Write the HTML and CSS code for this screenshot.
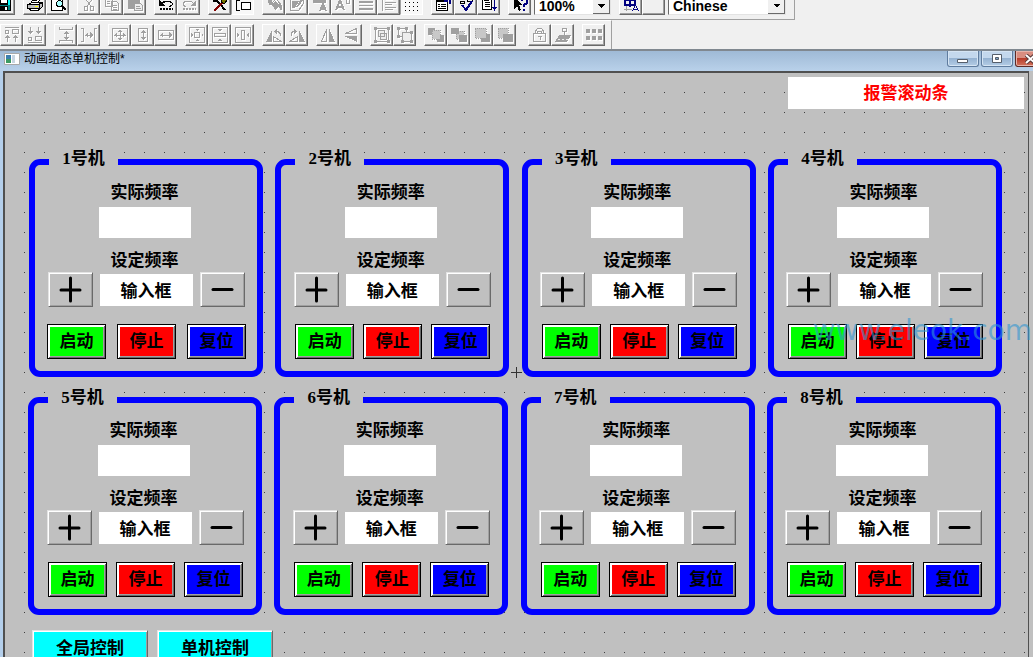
FILE: index.html
```
<!DOCTYPE html>
<html lang="zh-CN">
<head>
<meta charset="utf-8">
<title>动画组态单机控制</title>
<link rel="stylesheet" href="styles.css">
</head>
<body>
<div class="app">
  <div class="toolbar toolbar-main">
    <div class="group group-cut">
      <button class="tool" aria-label="保存"><svg viewBox="0 0 16 16"><path fill="#000" d="M1 1h14v14H1z"/><path fill="#0ff" d="M2 2h2v7H2zM12 2h2v7h-2z"/><path fill="#008080" d="M2 9h12v5H2z"/><path fill="#fff" d="M5 2h6v5H5z"/><path d="M4 10h8v5H4z"/><path fill="#fff" d="M9 11h2v3H9z"/></svg></button>
    </div>
    <div class="group">
      <button class="tool" aria-label="打印"><svg viewBox="0 0 16 16"><path fill="#fff" stroke="#000" d="M4.500 6.500l2-6h7l-2 6zM1.500 8.500l3-2h10l-3 2z"/><path fill="#c0c0c0" stroke="#000" d="M.5 8.500h12v4H.5zM12.500 8.500l3-2v4l-3 3z"/><path fill="#fff" stroke="#000" d="M2.500 12.500h10l-1 2h-8z"/><path fill="#ff0" d="M8 10h3v1H8z"/><path d="M7 2h4v1H7zM6 4h4v1H6z"/></svg></button>
      <button class="tool" aria-label="打印预览"><svg viewBox="0 0 16 16"><path fill="#fff" stroke="#000" d="M1.500.5h8l3 3v11h-11z"/><circle cx="9.500" cy="7.500" r="3" fill="#aff" stroke="#000"/><path stroke="#000" stroke-width="2" d="M12 10l3.500 4"/></svg></button>
    </div>
    <div class="group">
      <button class="tool off" aria-label="剪切"><svg viewBox="0 0 16 16"><path class="s" d="M5.500 0v4l4 6M10.500 0v4l-4 6"/><ellipse class="s" cx="5" cy="12.500" rx="1.500" ry="2.500"/><ellipse class="s" cx="11" cy="12.500" rx="1.500" ry="2.500"/></svg></button>
      <button class="tool off" aria-label="复制"><svg viewBox="0 0 16 16"><path class="s" d="M1.500 1.500h5l2 2v7h-7zM3 5h3M3 7h3M7.500 5.500h5l2 2v7h-7zM9 9h4M9 11h4M9 13h4"/></svg></button>
      <button class="tool off" aria-label="粘贴"><svg viewBox="0 0 16 16"><path d="M1 2h12v11H1z"/><path fill="#eee" stroke="#a0a0a0" d="M7.500 7.500h6l2 2v5h-8zM9 10h4M9 12h5"/></svg></button>
    </div>
    <div class="group">
      <button class="tool" aria-label="撤销"><svg viewBox="0 0 16 16"><path d="M1 4v6h6zM5 6h2v1H5z"/><path stroke="#000" stroke-width="2" stroke-dasharray="2 1" d="M2 13h13"/><path class="k" d="M4 7l2-2h5l3 2v2l-3 2"/></svg></button>
      <button class="tool off" aria-label="重做"><svg viewBox="0 0 16 16"><path d="M15 4v6H9z"/><path stroke="#a0a0a0" stroke-width="2" stroke-dasharray="2 1" d="M2 13h13"/><path class="s" d="M12 7l-2-2H5L2 7v2l3 2"/></svg></button>
    </div>
    <div class="group">
      <button class="tool" aria-label="工具"><svg viewBox="0 0 16 16"><path stroke="#000" stroke-width="2" d="M3 2l10 12"/><path d="M1 2h6v2H5v2H1z"/><path stroke="#800000" stroke-width="2" d="M10 7l-8 8"/><path fill="#770" stroke="#000" d="M9.500 3.500l3-3v3h3l-3 4-3-1z"/></svg></button>
      <button class="tool pressed" aria-label="窗口布局"><svg viewBox="0 0 16 16"><path class="k" d="M1.500 15V1.500h13M1 4.500h4M1 14.500h4M6.500 6.500h9v7h-9z"/><path fill="#fff" d="M7 7h8v6H7z"/></svg></button>
    </div>
    <div class="group">
      <button class="tool off" aria-label="填充色"><svg viewBox="0 0 16 16"><path d="M2 4h4v5H3zM5 7l5-5 5 6-6 6z"/><path stroke="#fff" d="M7 7l3-3 3 4"/><path d="M13 9h3v5h-2z"/></svg></button>
      <button class="tool off" aria-label="线色"><svg viewBox="0 0 16 16"><path class="s" d="M1.500 2.500h13v5l-5 7h-8z"/><path d="M3 5h7l-4 7H3zM12 3h3l-6 8H7z"/></svg></button>
      <button class="tool off" aria-label="字符色"><svg viewBox="0 0 16 16"><path d="M1 2h13v5H1z"/><path class="s" stroke-width="2" d="M8 15l3-7 3 7M9 13h4"/></svg></button>
      <button class="tool off" aria-label="字符字体"><svg viewBox="0 0 16 16"><path class="s" stroke-width="2" d="M1 14L5 4l4 10M3 11h5"/><path class="s" d="M11.500 3.500h3v4h-3zM14.500 1v7"/></svg></button>
      <button class="tool off" aria-label="线型"><svg viewBox="0 0 16 16"><path d="M1 2h14v1H1zM1 5h14v2H1zM1 9h14v1H1zM1 12h14v2H1z"/></svg></button>
      <button class="tool off" aria-label="对齐"><svg viewBox="0 0 16 16"><path d="M1 1h1v14H1zM4 3h7v1H4zM4 6h11v1H4zM4 8h7v1H4zM4 11h11v1H4zM4 13h8v1H4z"/></svg></button>
      <button class="tool pressed" aria-label="网格"><svg viewBox="0 0 16 16"><path stroke="#000" stroke-dasharray="1 3" d="M1 2.500h15M1 6.500h15M1 10.500h15M1 14.500h15"/></svg></button>
    </div>
    <div class="group">
      <button class="tool" aria-label="属性"><svg viewBox="0 0 16 16"><path fill="#fff" stroke="#000" d="M1.500 4.500h11v10h-11z"/><path d="M1 3h8v3H1zM3 8h2v1H3zM6 8h5v1H6zM3 10h2v1H3zM6 10h5v1H6zM3 12h8v1H3z"/><path fill="#000080" d="M9 2h4v4H9zM14 1h2v7h-2z"/></svg></button>
      <button class="tool" aria-label="检查"><svg viewBox="0 0 16 16"><path class="k" d="M2 5.500h4v2H2zM9 3.500h5v2H9z"/><path fill="none" stroke="#000080" stroke-width="2" d="M4 9l4 5 6-9"/></svg></button>
      <button class="tool" aria-label="排序"><svg viewBox="0 0 16 16"><path fill="#fff" stroke="#000" d="M1.500.5h9v13h-9z"/><path d="M3 4h5v1H3zM4 6h5v1H4zM4 8h5v1H4zM4 10h5v1H4z"/><path fill="#000080" d="M13 2h1v9h2l-2.500 4L11 11h2z"/></svg></button>
    </div>
    <div class="group">
      <button class="tool" aria-label="帮助"><svg viewBox="0 0 16 16"><path d="M2 1v12l3-3 2 5 2-1-2-5h4z"/><path fill="none" stroke="#000080" stroke-width="2" d="M10 5V3h5v4l-3 2v2M12 13v2"/></svg></button>
    </div>
    <select class="combo combo-zoom" aria-label="缩放"><option>100%</option></select>
    <div class="group">
      <button class="tool" aria-label="语言"><svg viewBox="0 0 16 16"><path fill="none" stroke="#000080" stroke-width="2" d="M2 4h10v5H2zM7 1v10"/><path stroke="#a0a0a0" d="M1 13.500h8M3.500 10v5"/><path fill="none" stroke="#000080" d="M9.500 15l3-6 3 6M10.500 13h4"/></svg></button>
      <button class="tool" aria-label="空"></button>
    </div>
    <select class="combo combo-lang" aria-label="语言选择"><option>Chinese</option></select>
  </div>

  <div class="toolbar toolbar-layout">
    <div class="group">
      <button class="tool off" aria-label="顶部对齐"><svg viewBox="0 0 16 16"><path class="s" d="M1 .5h14M1.500 3.500h3v3h-3zM8.500 2.500h6v4h-6zM3.500 9v6M11.500 9v6"/><path d="M1 11l2.500-3L6 11zM9 11l2.500-3 2.500 3z"/></svg></button>
      <button class="tool off" aria-label="底部对齐"><svg viewBox="0 0 16 16"><path class="s" d="M1 15.500h14M1.500 10.500h3v3h-3zM8.500 9.500h6v4h-6zM3.500 0v6M11.500 0v6"/><path d="M1 4l2.500 3L6 4zM9 4l2.500 3L14 4z"/></svg></button>
    </div>
    <div class="group">
      <button class="tool off" aria-label="纵向等间距"><svg viewBox="0 0 16 16"><path class="s" d="M1.500 0v2.500h13V0M1.500 16v-2.500h13V16M8 4v8"/><path d="M5 7l3-3 3 3zM5 10l3 3 3-3z"/></svg></button>
      <button class="tool off" aria-label="横向等间距"><svg viewBox="0 0 16 16"><path class="s" d="M0 1.500h2.500v13H0M16 1.500h-2.500v13H16M4 8h8"/><path d="M7 5L4 8l3 3zM9 5l3 3-3 3z"/></svg></button>
    </div>
    <div class="group">
      <button class="tool off" aria-label="等高宽"><svg viewBox="0 0 16 16"><path class="s" d="M.5 1.500h15v13H.5zM8 3v10M2 8h12"/><path d="M6 5l2-3 2 3zM6 11l2 3 2-3zM5 6L2 8l3 2zM11 6l3 2-3 2z"/></svg></button>
      <button class="tool off" aria-label="等高"><svg viewBox="0 0 16 16"><path class="s" d="M3.500 1.500h9v13h-9zM8 3v10"/><path d="M5 6l3-3 3 3zM5 10l3 3 3-3z"/></svg></button>
      <button class="tool off" aria-label="等宽"><svg viewBox="0 0 16 16"><path class="s" d="M.5 3.500h15v9H.5zM2 8h12"/><path d="M5 5L2 8l3 3zM11 5l3 3-3 3z"/></svg></button>
    </div>
    <div class="group">
      <button class="tool off" aria-label="窗口居中"><svg viewBox="0 0 16 16"><path class="s" d="M.5.5h15v15H.5zM5.500 5.500h5v5h-5z"/><path d="M6 2h4L8 4zM6 14h4l-2-2zM2 6v4l2-2zM14 6v4l-2-2z"/></svg></button>
      <button class="tool off" aria-label="纵向居中"><svg viewBox="0 0 16 16"><path class="s" d="M.5.5h15v15H.5zM2.500 6.500h11v3h-11z"/><path d="M6 2h4L8 5zM6 14h4l-2-3z"/></svg></button>
      <button class="tool off" aria-label="横向居中"><svg viewBox="0 0 16 16"><path class="s" d="M.5.5h15v15H.5zM6.500 3.500h3v9h-3z"/><path d="M2 6v4l3-2zM14 6v4l-3-2z"/></svg></button>
    </div>
    <div class="group">
      <button class="tool off" aria-label="左旋"><svg viewBox="0 0 16 16"><path d="M0 15L6 3v12z"/><path class="s" d="M7.500 14.500h8l-8-5zM9 4.500h3l2 2v2"/><path d="M8 4.500L11 2v5z"/></svg></button>
      <button class="tool off" aria-label="右旋"><svg viewBox="0 0 16 16"><path d="M16 15L10 3v12z"/><path class="s" d="M8.500 14.500h-8l8-5zM7 4.500H4l-2 2v2"/><path d="M8 4.500L5 2v5z"/></svg></button>
    </div>
    <div class="group">
      <button class="tool off" aria-label="左右镜像"><svg viewBox="0 0 16 16"><path class="s" d="M6.500 2.500v12h-5z"/><path d="M9 1v14h6z"/></svg></button>
      <button class="tool off" aria-label="上下镜像"><svg viewBox="0 0 16 16"><path class="s" d="M13.500 1.500v5h-11z"/><path d="M1 9h13v6z"/></svg></button>
    </div>
    <div class="group">
      <button class="tool off" aria-label="组合"><svg viewBox="0 0 16 16"><path class="s" d="M1.500 1.500h13v13h-13z"/><path fill="#eee" stroke="#a0a0a0" d="M4.500 3.500h6v6h-6zM6.500 6.500h6v6h-6z"/><path d="M0 0h3v3H0zM13 0h3v3h-3zM0 13h3v3H0zM13 13h3v3h-3z"/></svg></button>
      <button class="tool off" aria-label="分解"><svg viewBox="0 0 16 16"><path class="s" d="M1.500 1.500h8v8h-8z"/><path fill="#eee" stroke="#a0a0a0" d="M5.500 5.500h9v9h-9z"/><path d="M0 0h3v3H0zM8 0h3v3H8zM0 8h3v3H0zM13 4h3v3h-3zM4 13h3v3H4zM13 13h3v3h-3z"/></svg></button>
    </div>
    <div class="group group-order">
      <button class="tool off" aria-label="置前"><svg viewBox="0 0 16 16"><path d="M0 1h7v7H0zM9 8h7v7H9z"/><path class="hatch" d="M4 3h8v9H4z"/></svg></button>
      <button class="tool off" aria-label="置后"><svg viewBox="0 0 16 16"><path class="hatch" d="M5 4h8v8H5z"/><path d="M0 1h8v6H0zM8 8h8v7H8z"/></svg></button>
      <button class="tool off" aria-label="上移一层"><svg viewBox="0 0 16 16"><path d="M7 7h9v8H7z"/><path class="hatch" d="M1 1h11v10H1z"/></svg></button>
      <button class="tool off" aria-label="下移一层"><svg viewBox="0 0 16 16"><path class="hatch" d="M1 1h10v10H1z"/><path d="M6 7h10v8H6z"/></svg></button>
    </div>
    <div class="group">
      <button class="tool off" aria-label="锁定"><svg viewBox="0 0 16 16"><path class="s" d="M1.500 6.500h12v8h-12zM3.500 6V4l2-2.500h4l2 2.500v2M5.500 6V4.500h4V6M6 9.500h4M8 9v4"/></svg></button>
      <button class="tool off" aria-label="固化"><svg viewBox="0 0 16 16"><path d="M4 8h12l-4 7H0z"/><circle class="s" cx="9.500" cy="3" r="2"/><path class="s" d="M9.500 5v4"/><path stroke="#eee" stroke-dasharray="2 2" d="M3 12.500h10"/></svg></button>
    </div>
    <div class="group">
      <button class="tool off" aria-label="多重复制"><svg viewBox="0 0 16 16"><path d="M0 2h4v4H0zM6 2h4v4H6zM12 2h4v4h-4zM0 9h4v4H0zM6 9h4v4H6zM12 9h4v4h-4z"/></svg></button>
    </div>
  </div>

  <header class="titlebar">
    <svg class="doc-icon" viewBox="0 0 16 12"><path fill="#fff" stroke="#a8a8a8" d="M.5.5h15v11H.5z"/><path fill="#3b7fae" d="M2 2h5v4H2z"/><path fill="#3c9a62" d="M2 6h5v4H2z"/><path fill="#c9d6e2" d="M8 2h3v8H8z"/></svg>
    <h1 class="title">动画组态单机控制*</h1>
    <button class="win" aria-label="最小化"><svg viewBox="0 0 12 10"><path fill="#fff" stroke="#555e6b" d="M.5 5.500h10v3H.5z"/></svg></button>
    <button class="win" aria-label="还原"><svg viewBox="0 0 12 10"><path fill="#fff" stroke="#555e6b" d="M1.500.5h9v8h-9z"/><path fill="#7fa3c8" stroke="#555e6b" d="M4.500 3.500h3v2h-3z"/></svg></button>
    <button class="win win-close" aria-label="关闭"><svg viewBox="0 0 12 10"><path stroke="#5b3a3a" stroke-width="4" d="M1 1l9 8M10 1L1 9"/><path stroke="#fff" stroke-width="2" d="M1 1l9 8M10 1L1 9"/></svg></button>
  </header>

  <main class="frame">
    <div class="canvas">
      <div class="alarm">报警滚动条</div>
      <div class="machines machines-top" data-first="1"></div>
      <div class="machines machines-bottom" data-first="5"></div>
      <nav class="pages">
        <button class="page">全局控制</button>
        <button class="page">单机控制</button>
      </nav>
      <svg class="cross" viewBox="0 0 11 11"><path stroke="#333" d="M5.500 0v11M0 5.500h11"/></svg>
      <div class="watermark">www.eleok.com</div>
    </div>
  </main>
</div>
<script src="script.js"></script>
</body>
</html>
```
FILE: styles.css
```
* { box-sizing: border-box; }

body {
  margin: 0;
  background: #f0f0f0;
  color: #000;
  font-family: "Liberation Sans", "Noto Sans CJK SC", sans-serif;
  overflow: hidden;
}

button, select, input { font: inherit; color: inherit; border-radius: 0; }

.app {
  display: flex;
  flex-direction: column;
  height: 100vh;
  overflow: hidden;
}

/* Toolbars */
.toolbar {
  display: flex;
  flex: none;
  align-self: flex-start;
  gap: 8px;
}

.toolbar-main {
  height: 20px;
  align-items: flex-end;
  padding: 0 8px 4px 0;
  border-bottom: 1px solid #a0a0a0;
  border-right: 1px solid #a0a0a0;
}

.toolbar-layout {
  height: 29px;
  padding: 3px 6px 0 0;
  border-top: 1px solid #fff;
  border-right: 1px solid #a0a0a0;
}

.group { display: flex; flex: none; }
.group-cut { margin-left: -8px; }
.group-order { margin-right: 4px; }

.tool {
  display: grid;
  place-items: center;
  width: 23px;
  height: 22px;
  padding: 0;
  background: #f0f0f0;
  border: 1px solid;
  border-color: #fff #696969 #696969 #fff;
  box-shadow: inset -1px -1px #a0a0a0;
}

.tool svg { width: 16px; height: 16px; shape-rendering: crispEdges; }
.tool .k { fill: none; stroke: #000; }
.off svg { fill: #a0a0a0; filter: drop-shadow(1px 1px 0 #fff); }
.off .s { fill: none; stroke: #a0a0a0; }
.off .hatch { fill: #c8c8c8; stroke: #a0a0a0; stroke-dasharray: 1 1; }

.pressed {
  background: #f8f8f8;
  border-color: #a0a0a0 #fff #fff #a0a0a0;
  box-shadow: none;
}

.combo {
  appearance: none;
  height: 22px;
  margin-left: -5px;
  padding: 4px 18px 0 4px;
  border: 1px solid #e3e3e3;
  border-left: 1px solid #696969;
  background-color: #fff;
  background-image:
    linear-gradient(to bottom left, #000 50%, transparent 50%),
    linear-gradient(to bottom right, #000 50%, transparent 50%),
    linear-gradient(#696969, #696969),
    linear-gradient(#696969, #696969),
    linear-gradient(#f0f0f0, #f0f0f0);
  background-repeat: no-repeat;
  background-position: right 8px top 10px, right 4px top 10px, right 0 top 0, right 0 bottom 0, right 0 top 0;
  background-size: 4px 4px, 4px 4px, 1px 20px, 17px 1px, 17px 20px;
  font-family: "Liberation Sans", sans-serif;
  font-size: 14px;
  font-weight: bold;
  line-height: 16px;
}
.combo-zoom { width: 77px; }
.combo-lang { width: 118px; }

/* Document window */
.titlebar {
  display: flex;
  flex: none;
  align-items: flex-start;
  gap: 2px;
  height: 22px;
  padding-left: 4px;
  border-top: 2px solid #808890;
  background: linear-gradient(#9fbad6, #b9d1ea);
  overflow: hidden;
}

.doc-icon { width: 16px; height: 12px; margin: 2px 2px 0 0; flex: none; }

.title {
  flex: 1;
  margin: 0;
  font-size: 12px;
  font-weight: normal;
  line-height: 17px;
  white-space: nowrap;
}

.win {
  display: grid;
  place-items: center;
  flex: none;
  width: 32px;
  height: 16px;
  padding: 0;
  border: 1px solid #5f7c9e;
  border-top: 0;
  border-radius: 0 0 3px 3px;
  background: linear-gradient(#c4d8ed 50%, #96b3d2 50%, #b4cde6);
  box-shadow: inset 0 0 0 1px #d5e4f3;
}
.win svg { width: 12px; height: 10px; }
.win-close {
  margin-right: -14px;
  border-color: #5c2a26;
  background: linear-gradient(#d98d80 50%, #b83c2a 50%, #d2735e);
  box-shadow: inset 0 0 0 1px #e8b3a9;
}

.frame {
  flex: 1;
  min-height: 0;
  padding-right: 4px;
  border-left: 3px solid #b4cfeb;
  background: #c0c0c0;
}

.canvas {
  position: relative;
  display: flex;
  flex-direction: column;
  height: 100%;
  padding-top: 4px;
  border: 2px solid #505050;
  border-right-width: 1px;
  border-bottom: 0;
  background: conic-gradient(from 270deg at 1px 1px, #404040 90deg, transparent 0) 19px 19px / 20px 20px #c0c0c0;
  background-origin: padding-box;
  font-family: "Liberation Serif", "Noto Sans CJK SC", serif;
  font-size: 17px;
  font-weight: bold;
  line-height: 20px;
}

.alarm {
  align-self: flex-end;
  width: 236px;
  height: 32px;
  margin-right: 4px;
  background: #fff;
  color: #f00;
  line-height: 34px;
  text-align: center;
}

.machines { display: flex; flex: none; justify-content: space-between; }
.machines-top { margin: 50px 26px 0 24px; }
.machines-bottom { margin: 20px 27px 0 23px; }

.machine {
  position: relative;
  display: flex;
  flex-direction: column;
  align-items: center;
  width: 234px;
  padding: 18px 3px 12px 0;
  border: 6px solid #00f;
  border-radius: 11px;
  background: #c0c0c0;
}

.name {
  position: absolute;
  top: -16px;
  left: 14px;
  width: 69px;
  margin: 0;
  background: #c0c0c0;
  font-size: 17px;
  text-align: center;
}
.machines-bottom .name { top: -15px; }

.actual { width: 92px; height: 31px; margin: 4px 0 13px; background: #fff; }

.setpoint { display: flex; align-items: center; gap: 7px; margin: 1px 0 0 3px; }

.value {
  width: 93px;
  height: 32px;
  padding: 0;
  border: 0;
  background: #fff;
  text-align: center;
}

.step {
  display: grid;
  place-items: center;
  width: 45px;
  height: 35px;
  padding: 0;
  border: 1px solid;
  border-color: #e3e3e3 #696969 #696969 #e3e3e3;
  box-shadow: inset 1px 1px #fff, inset -1px -1px #a0a0a0;
  background: #c0c0c0;
}
.step svg { width: 27px; height: 27px; }

.actions { display: flex; gap: 9px; margin: 17px 0 0 4px; }
.actions-wide { gap: 11px; }

.action {
  width: 59px;
  height: 35px;
  padding: 0;
  border: 1px solid #000;
  box-shadow: inset 1px 1px #fff, inset -1px -1px #696969, inset 2px 2px #fff, inset -2px -2px #a0a0a0;
}
.start { background: #0f0; }
.stop { background: #f00; }
.reset { background: #00f; }

.pages { display: flex; gap: 9px; margin: 15px 0 0 27px; }
.page {
  width: 116px;
  height: 37px;
  padding: 0;
  border: 1px solid;
  border-color: #e3e3e3 #696969 #696969 #e3e3e3;
  box-shadow: inset 1px 1px #fff, inset -1px -1px #a0a0a0;
  background: #0ff;
}

.cross { position: absolute; left: 506px; top: 294px; width: 11px; height: 11px; }

.watermark {
  position: absolute;
  top: 242px;
  right: -4px;
  color: rgba(50, 150, 210, 0.6);
  font-family: "DejaVu Sans", sans-serif;
  font-size: 28px;
  font-weight: normal;
  line-height: 32px;
  pointer-events: none;
}
```
FILE: script.js
```
function machine(n) {
  return `
    <section class="machine">
      <h2 class="name">${n}号机</h2>
      <label for="actual${n}">实际频率</label>
      <output class="actual" id="actual${n}"></output>
      <label for="set${n}">设定频率</label>
      <div class="setpoint">
        <button class="step" aria-label="增加"><svg viewBox="0 0 27 27"><path stroke="#000" stroke-width="3" stroke-linecap="round" d="M13.500 2v23M4 14h19"/></svg></button>
        <input class="value" id="set${n}" value="输入框">
        <button class="step" aria-label="减少"><svg viewBox="0 0 27 27"><path stroke="#000" stroke-width="3" stroke-linecap="round" d="M4 13.500h19"/></svg></button>
      </div>
      <div class="actions${n === 1 ? " actions-wide" : ""}">
        <button class="action start">启动</button>
        <button class="action stop">停止</button>
        <button class="action reset">复位</button>
      </div>
    </section>`;
}

document.querySelectorAll(".machines").forEach((row) => {
  const first = Number(row.dataset.first);
  row.innerHTML = [0, 1, 2, 3].map((i) => machine(first + i)).join("");
});
```
